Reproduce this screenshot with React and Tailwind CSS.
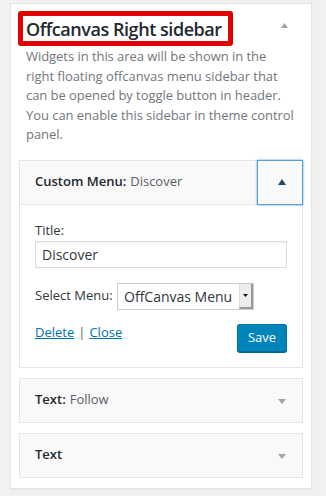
import React from "react";

const Tri = ({ up = false, color = "#a0a5aa", w = 8, h = 5 }) => (
  <svg width={w} height={h} viewBox={`0 0 ${w} ${h}`} className="block">
    {up ? (
      <polygon points={`0,${h} ${w / 2},0 ${w},${h}`} fill={color} />
    ) : (
      <polygon points={`0,0 ${w},0 ${w / 2},${h}`} fill={color} />
    )}
  </svg>
);

const ClosedWidget = ({ title, sub }) => (
  <div className="relative h-[45px] border border-[#e5e5e5] bg-[#f9f9f9] flex items-center pl-[15px] text-[13px]">
    <span className="font-semibold text-[#23282d]">{title}</span>
    {sub && <span className="text-[#555d66] ml-[4px]">{sub}</span>}
    <div className="absolute right-[16px] top-[20px]">
      <Tri w={8} h={5} color="#a0a5aa" />
    </div>
  </div>
);

const descLines = [
  "Widgets in this area will be shown in the",
  "right floating offcanvas menu sidebar that",
  "can be opened by toggle button in header.",
  "You can enable this sidebar in theme control",
  "panel.",
];

export default function App() {
  return (
    <div
      className="w-[326px] h-[496px] bg-[#f1f1f1] pt-[3px] pl-[10px] overflow-hidden"
      style={{ fontFamily: '"Open Sans", "Noto Sans", sans-serif' }}
    >
      <div className="w-[302px] h-[486px] bg-white border border-[#e5e5e5] shadow-[0_1px_1px_rgba(0,0,0,0.04)]">
        <div className="relative pt-[7px] pl-[7px]">
          <div className="w-[215px] h-[35px] border-[5px] border-[#e00000] rounded-[3px] flex items-center pl-[3px]">
            <span className="text-[18px] font-semibold text-[#23282d] leading-none whitespace-nowrap tracking-[-0.45px]">
              Offcanvas Right sidebar
            </span>
          </div>
          <div className="absolute left-[270px] top-[19px]">
            <Tri up w={7} h={5} color="#a0a5aa" />
          </div>
        </div>
        <p className="mt-[1px] px-[15px] text-[13px] leading-[19.5px] text-[#72777c] tracking-[-0.05px]">
          {descLines.map((l, i) => (
            <span key={i} className="block whitespace-nowrap">
              {l}
            </span>
          ))}
        </p>
        <div className="mt-[15px] px-[8px] flex flex-col gap-[10px]">
          <div className="border border-[#e5e5e5] bg-white">
            <div className="relative h-[44px] bg-[#f9f9f9] border-b border-[#e5e5e5] flex items-center pl-[15px] text-[13px]">
              <span className="font-semibold text-[#23282d]">Custom Menu:</span>
              <span className="text-[#555d66] ml-[4px]">Discover</span>
              <div className="absolute -top-px -right-px w-[46px] h-[45px] border border-[#5b9dd9] shadow-[0_0_2px_rgba(30,140,190,0.8)] flex items-center justify-center">
                <div className="ml-[3px]">
                  <Tri up w={8} h={6} color="#1e4a66" />
                </div>
              </div>
            </div>
            <div className="px-[15px] pt-[15px] pb-[15px] text-[13px] text-[#444]">
              <div className="leading-[20px] text-[#32373c]">Title:</div>
              <div className="mt-[1px] h-[27px] border border-[#ddd] shadow-[inset_0_1px_2px_rgba(0,0,0,0.07)] flex items-center pl-[6px] text-[14px] text-[#32373c]">
                Discover
              </div>
              <div className="mt-[15px] flex items-center">
                <span className="text-[#32373c] w-[82px]">Select Menu:</span>
                <div className="w-[137px] h-[27px] border border-[#ccc] flex items-stretch bg-white">
                  <div className="flex-1 flex items-center pl-[6px] text-[14px] text-[#32373c] whitespace-nowrap overflow-hidden">
                    OffCanvas Menu
                  </div>
                  <div className="w-[14px] bg-[#ececec] border-l border-[#ddd] border-r-2 border-b-2 border-r-[#9a9a9a] border-b-[#9a9a9a] flex items-center justify-center">
                    <Tri w={5} h={3} color="#111" />
                  </div>
                </div>
              </div>
              <div className="mt-[12px] flex justify-between items-start">
                <div className="leading-[20px]">
                  <a className="text-[#0073aa] underline">Delete</a>
                  <span className="text-[#666] mx-[4px]">|</span>
                  <a className="text-[#0073aa] underline">Close</a>
                </div>
                <button className="mt-[2px] w-[50px] h-[28px] bg-[#0085ba] border border-[#0073aa] border-b-[#006799] rounded-[3px] text-white text-[13px] shadow-[0_1px_0_#006799] leading-none">
                  Save
                </button>
              </div>
            </div>
          </div>
          <ClosedWidget title="Text:" sub="Follow" />
          <ClosedWidget title="Text" />
        </div>
      </div>
    </div>
  );
}
